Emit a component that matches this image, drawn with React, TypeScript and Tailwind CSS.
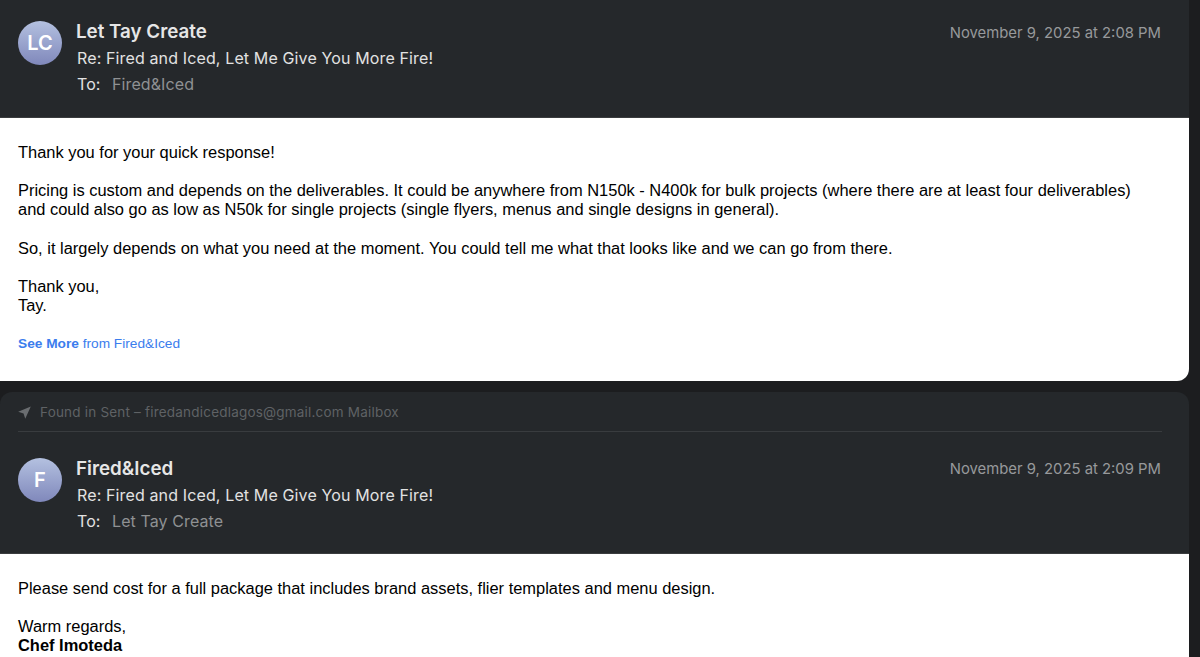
import React from "react";

const ui = "font-['Inter','Noto_Sans',sans-serif]";

function Header({ initials, name, to, date, dateClass }: { initials: string; name: string; to: string; date: string; dateClass: string }) {
  return (
    <div className="flex items-start">
      <div className="mt-[3px] flex h-[44px] w-[44px] shrink-0 items-center justify-center rounded-full bg-gradient-to-b from-[#b4c1e0] to-[#8088bb] text-[20px] font-semibold text-white">
        {initials}
      </div>
      <div className="ml-[14px] flex-1">
        <div className="h-[26px] text-[18.8px] leading-[28px] font-semibold text-[#e6e6e6]">{name}</div>
        <div className="mt-[1px] ml-[1px] h-[26px] text-[16px] leading-[26px] tracking-[0.13px] text-[#e2e2e2]">
          Re: Fired and Iced, Let Me Give You More Fire!
        </div>
        <div className="ml-[1px] flex h-[26px] text-[16px] leading-[26px] tracking-[0.1px]">
          <span className="w-[35px] text-[#e2e2e2]">To:</span>
          <span className="text-[#8f9193]">{to}</span>
        </div>
      </div>
      <div className={`text-[14.85px] leading-[24px] text-[#97999b] ${dateClass}`}>{date}</div>
    </div>
  );
}

export default function App() {
  return (
    <div className="flex h-[657px] w-[1200px] flex-col overflow-hidden bg-[#1c1d1f] font-['Liberation_Sans',Arial,sans-serif]">
      <div className="w-[1189px] overflow-hidden rounded-br-[12px]">
        <div className={`h-[117px] bg-[#25282b] pt-[18px] pr-[28px] pl-[18px] ${ui}`}>
          <Header initials="LC" name="Let Tay Create" to="Fired&Iced" date="November 9, 2025 at 2:08 PM" dateClass="mt-[3px]" />
        </div>
        <div className="h-[264px] border-t border-[#3a3c3e] bg-white pt-[25px] pr-[40px] pl-[18px] text-[16.45px] leading-[19px] text-black">
          <p>Thank you for your quick response!</p>
          <p className="mt-[19px]">
            Pricing is custom and depends on the deliverables. It could be anywhere from N150k - N400k for bulk projects (where there are at least four deliverables) and could also go as low as N50k for single projects (single flyers, menus and single designs in general).
          </p>
          <p className="mt-[20px]">
            So, it largely depends on what you need at the moment. You could tell me what that looks like and we can go from there.
          </p>
          <p className="mt-[19px]">
            Thank you,
            <br />
            Tay.
          </p>
          <p className="mt-[19px] text-[13.7px] text-[#3b7ded]">
            <span className="font-bold">See More</span> from Fired&amp;Iced
          </p>
        </div>
      </div>
      <div className="mt-[11px] w-[1189px] flex-1 overflow-hidden rounded-t-[12px] bg-[#25282b]">
        <div className={`mr-[27px] ml-[18px] flex h-[40px] items-center border-b border-[#393c3f] pt-[2px] text-[13.5px] tracking-[0.2px] text-[#5f6265] ${ui}`}>
          <svg viewBox="0 0 12 12" className="mr-[9px] h-[13px] w-[13px] fill-[#6a6d70]">
            <path d="M11.8.4 .2 5.3l4.9 1.7 1.6 4.8Z" />
          </svg>
          Found in Sent – firedandicedlagos@gmail.com Mailbox
        </div>
        <div className={`h-[121px] pt-[23px] pr-[28px] pl-[18px] ${ui}`}>
          <Header initials="F" name="Fired&Iced" to="Let Tay Create" date="November 9, 2025 at 2:09 PM" dateClass="mt-[2px]" />
        </div>
        <div className="h-[104px] border-t border-[#3a3c3e] bg-white pt-[25px] pl-[18px] text-[16.45px] leading-[19px] text-black">
          <p>Please send cost for a full package that includes brand assets, flier templates and menu design.</p>
          <p className="mt-[19px]">Warm regards,</p>
          <p className="font-bold">Chef Imoteda</p>
        </div>
      </div>
    </div>
  );
}
